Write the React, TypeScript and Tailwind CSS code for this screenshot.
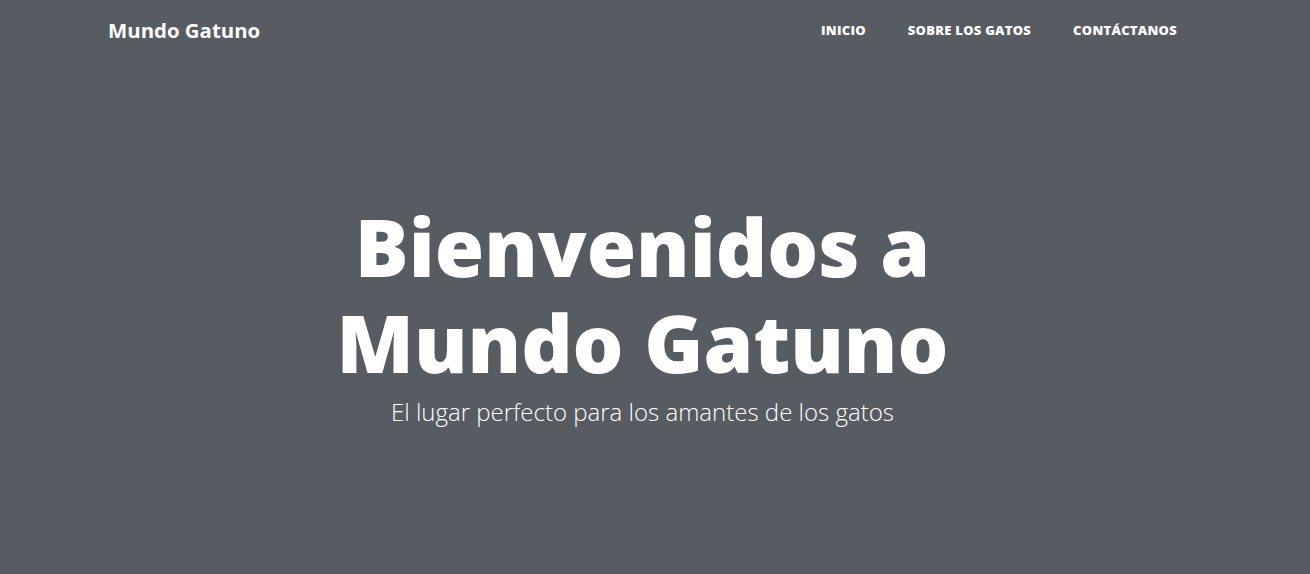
export default function App() {
  const links = ["Inicio", "Sobre los gatos", "Contáctanos"];

  return (
    <div
      className="min-h-[574px] w-full bg-[#575b62] text-white"
      style={{ fontFamily: '"Open Sans", "Liberation Sans", sans-serif' }}
    >
      <div className="w-[1285px]">
        <nav className="flex items-center justify-between px-[108px] pt-[16px]">
          <a href="#" className="text-[20.4px] font-bold leading-[28px]">
            Mundo Gatuno
          </a>
          <ul className="flex items-center gap-[42px]">
            {links.map((link) => (
              <li key={link}>
                <a
                  href="#"
                  className="text-[13px] font-extrabold uppercase tracking-[0.02em] leading-[28px]"
                >
                  {link}
                </a>
              </li>
            ))}
          </ul>
        </nav>

        <header className="flex flex-col items-center pt-[154px] text-center">
          <h1 className="text-[80px] font-extrabold leading-[96px]">
            Bienvenidos a
            <br />
            Mundo Gatuno
          </h1>
          <p className="mt-[6px] text-[24px] font-light leading-[32px]">
            El lugar perfecto para los amantes de los gatos
          </p>
        </header>
      </div>
    </div>
  );
}
